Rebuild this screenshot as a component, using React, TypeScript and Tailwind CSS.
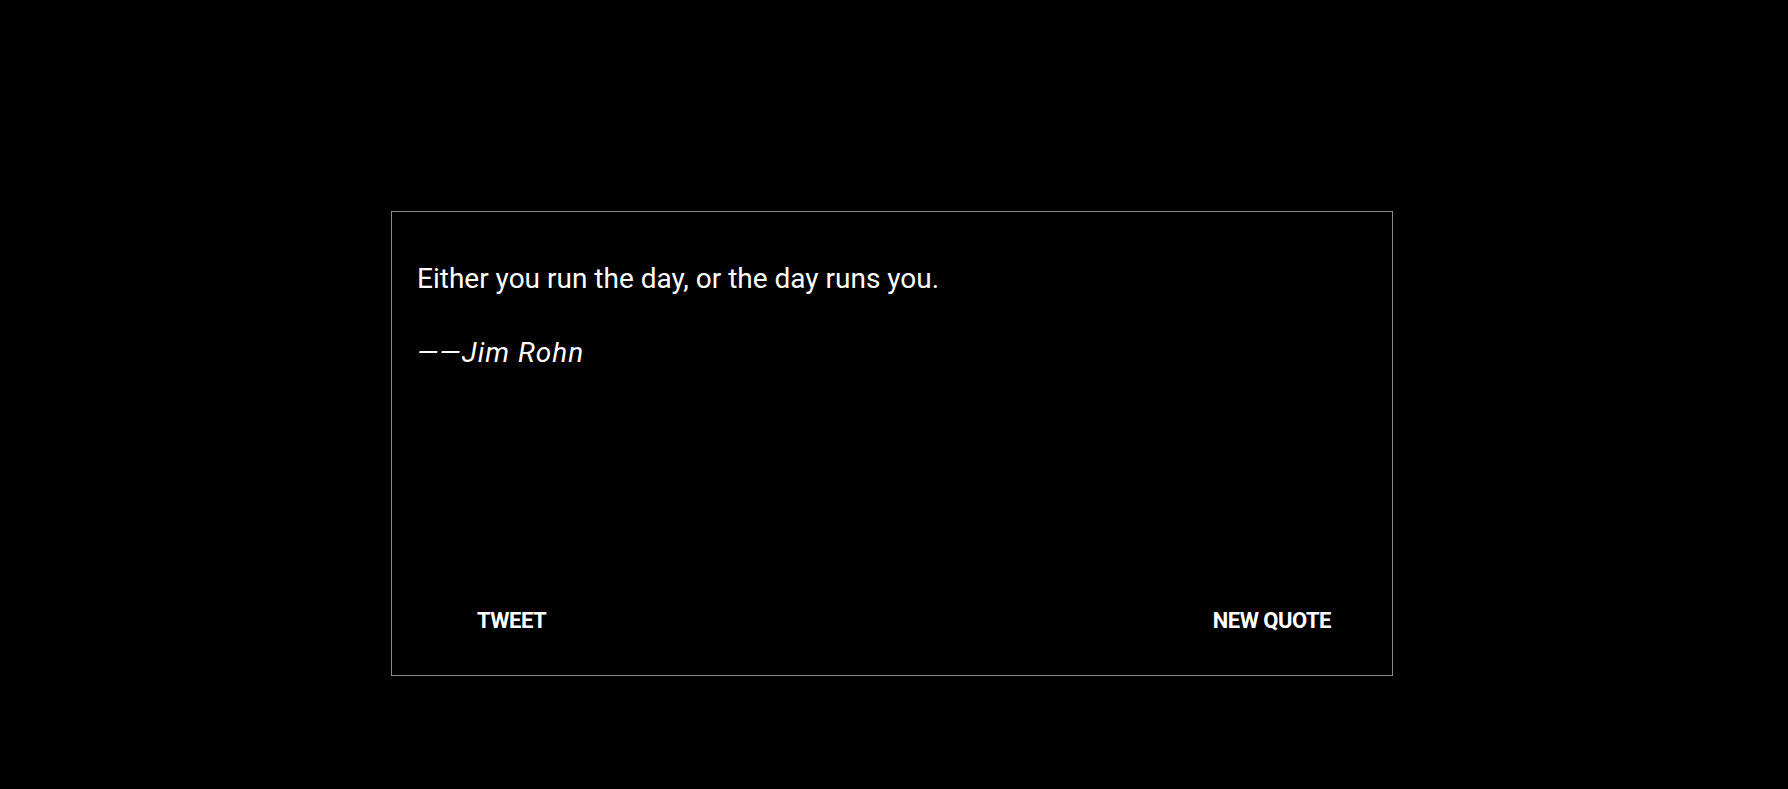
export default function App() {
  return (
    <div className="min-h-[789px] w-full bg-black pt-[211px] font-['Roboto',sans-serif] text-white">
      <div className="mx-auto flex h-[465px] w-[1002px] -translate-x-[2px] flex-col border border-[#8a8a8a]">
        <div className="px-[25px] pt-[49px]">
          <p className="text-[28px] leading-[36px]">
            Either you run the day, or the day runs you.
          </p>
          <p className="mt-[38px] text-[28px] italic leading-[36px] tracking-[1px]">
            ——Jim Rohn
          </p>
        </div>
        <div className="mt-auto flex items-center justify-between pb-[40px] pl-[85px] pr-[61px]">
          <button className="text-[22px] font-bold leading-[28px] tracking-[-0.5px]">TWEET</button>
          <button className="text-[22px] font-bold leading-[28px] tracking-[-0.5px]">NEW QUOTE</button>
        </div>
      </div>
    </div>
  );
}
